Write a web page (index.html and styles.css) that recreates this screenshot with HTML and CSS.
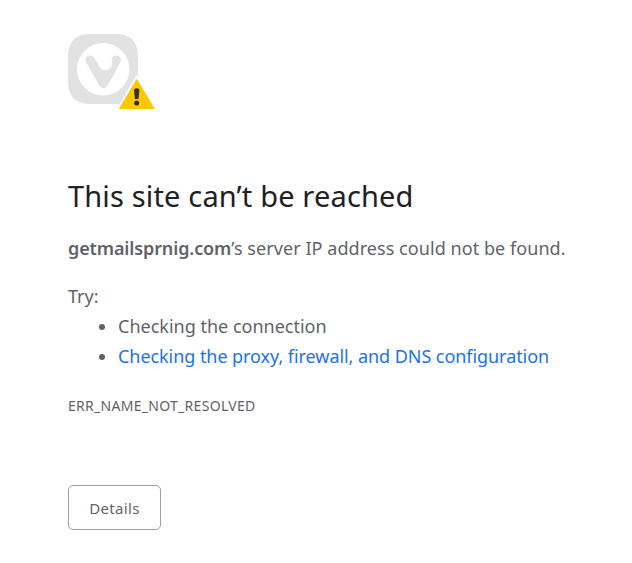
FILE: index.html
```html
<!DOCTYPE html>
<html lang="en">
<head>
<meta charset="utf-8">
<title>getmailsprnig.com</title>
<link rel="stylesheet" href="styles.css">
</head>
<body>
<main class="error-page">
  <svg class="site-icon" viewBox="0 0 90 78" aria-hidden="true">
    <path class="tile" d="M24 0H46C63 0 70 7 70 24V46C70 63 63 70 46 70H24C7 70 0 63 0 46V24C0 7 7 0 24 0Z"/>
    <circle class="disc" cx="35.200" cy="35.200" r="26.200"/>
    <path class="tile" d="M18.300 28.400C16.200 24.800 18.500 21.500 22.200 21.500c2 0 3.400 1 4.300 2.600l4.800 8.300c1.400 2.400 3.300 3.800 5.800 3.800 4 0 7-2.900 7-6.500 0-1.300-.5-2.300-.5-3.800 0-2.500 1.900-4.400 4.500-4.400 3.700 0 6.200 3.500 4.200 6.900L39.800 51.500c-2 3.400-6.700 3.400-8.600 0Z"/>
    <path class="warning-edge" d="M68.500 41L89.500 77H48Z"/>
    <path class="warning" d="M68.700 44.700L87 75H50.700Z"/>
    <path class="mark" d="M66 56q0-1.700 2.700-1.700T71.400 56l-.9 9h-3.600Z"/>
    <circle class="mark" cx="68.700" cy="69" r="2.500"/>
  </svg>
  <h1 class="title">This site can’t be reached</h1>
  <p class="message"><strong class="host">getmailsprnig.com</strong><span class="reason">’s server IP address could not be found.</span></p>
  <p class="try">Try:</p>
  <ul class="suggestions">
    <li><span class="check">Checking the connection</span></li>
    <li><a class="link" href="#">Checking the proxy, firewall, and DNS configuration</a></li>
  </ul>
  <p class="code">ERR_NAME_NOT_RESOLVED</p>
  <button class="details" type="button">Details</button>
</main>
</body>
</html>
```
FILE: styles.css
```css
body {
  margin: 0;
  background: #fff;
  color: #5f6368;
  font: 18px/30px "Noto Sans", sans-serif;
}
.error-page {
  padding: 34px 0 0 68px;
  white-space: nowrap;
}
.site-icon {
  display: block;
  width: 90px;
  height: 78px;
}
.tile { fill: #e2e2e2; }
.disc, .warning-edge { fill: #fff; }
.warning { fill: #ffc700; }
.mark { fill: #303030; }
.title {
  margin: 65px 0 0;
  color: #202124;
  font-size: 29px;
  font-weight: 400;
  letter-spacing: 0.16px;
  line-height: 38px;
}
.message { margin: 18px 0 0; }
.host {
  font-weight: 600;
  letter-spacing: -0.12px;
}
.reason { letter-spacing: 0.06px; }
.try { margin: 18px 0 0; }
.suggestions {
  margin: 0;
  padding-left: 50px;
}
.link {
  color: #1a73e8;
  letter-spacing: -0.06px;
  text-decoration: none;
}
.code {
  margin: 25px 0 0;
  font-size: 14px;
  letter-spacing: 0.29px;
  line-height: 20px;
}
.details {
  display: block;
  box-sizing: border-box;
  width: 93px;
  height: 45px;
  margin-top: 69px;
  padding: 0;
  border: 1px solid #9aa0a6;
  border-radius: 5px;
  background: #fff;
  color: #5f6368;
  font: 15px "Noto Sans", sans-serif;
  letter-spacing: 0.3px;
}
```
